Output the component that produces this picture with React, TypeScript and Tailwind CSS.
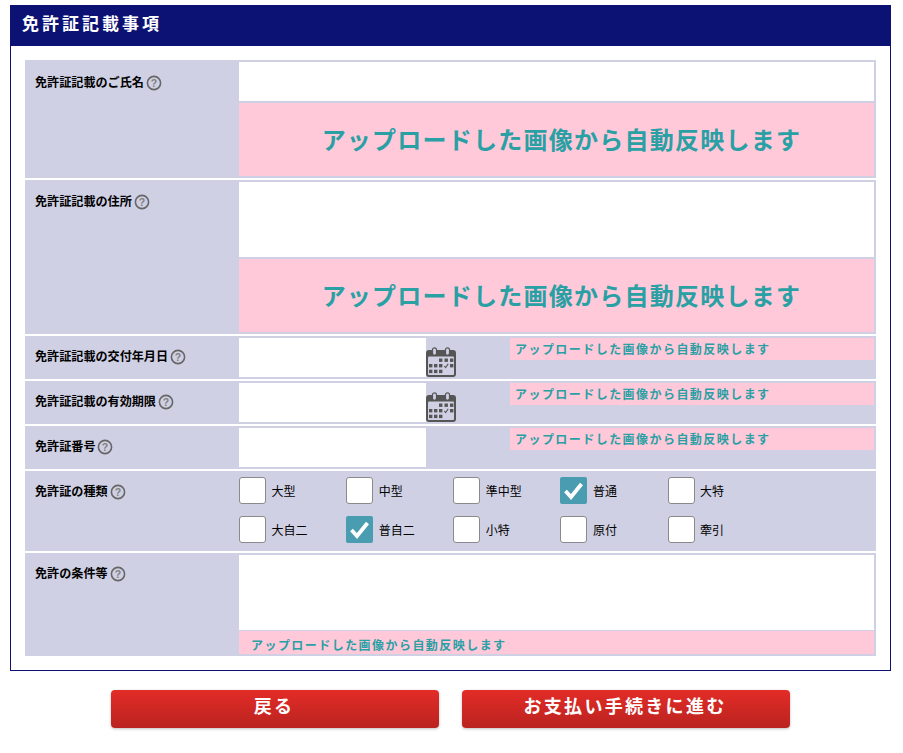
const msg = "アップロードした画像から自動反映します";

function Help() {
  return (
    <svg width="16" height="16" viewBox="0 0 16 16" className="ml-[2px] mt-[0.5px] shrink-0">
      <circle cx="8" cy="8" r="6.6" fill="none" stroke="#666" strokeWidth="1.6" />
      <text x="8" y="11.7" textAnchor="middle" fontSize="10.5" fontWeight="700" fill="#808080" fontFamily="Liberation Sans, sans-serif">?</text>
    </svg>
  );
}

function Label({ text }: { text: string }) {
  return (
    <div className="w-[214px] shrink-0 pl-[10px] flex items-start text-[12.1px] font-bold text-black leading-[16px]">
      <span>{text}</span>
      <Help />
    </div>
  );
}

function Calendar() {
  const cells = [
    [13, 11.5], [18.5, 11.5], [24, 11.5],
    [3, 17], [8, 17], [13, 17], [24, 17],
    [3, 22.7], [8, 22.7], [13, 22.7],
  ];
  return (
    <svg width="30" height="30" viewBox="0 0 30 30" className="shrink-0 self-end">
      <path d="M3 3h24a3 3 0 0 1 3 3v21a3 3 0 0 1-3 3H3a3 3 0 0 1-3-3V6a3 3 0 0 1 3-3z" fill="#555" />
      <rect x="2" y="9.5" width="26" height="18.5" rx="1" fill="#d0d0e4" />
      <rect x="6.5" y="0.8" width="4" height="7.5" rx="2" fill="#d0d0e4" stroke="#555" strokeWidth="1.2" />
      <rect x="19.5" y="0.8" width="4" height="7.5" rx="2" fill="#d0d0e4" stroke="#555" strokeWidth="1.2" />
      {cells.map(([x, y], i) => (
        <rect key={i} x={x} y={y} width="3.4" height="3.4" fill="#555" />
      ))}
      <path d="M18.3 19l1.3 1.5 2.6-3.6" fill="none" stroke="#555" strokeWidth="1.1" />
    </svg>
  );
}

function Check({ label, checked }: { label: string; checked?: boolean }) {
  return (
    <div className="w-[107.15px] h-[27px] flex items-center">
      <div
        className={
          checked
            ? "w-[27px] h-[27px] rounded-[2px] bg-[#4a9cb0] flex items-center justify-center"
            : "w-[27px] h-[27px] rounded-[3px] bg-white border border-[#8a8a8a]"
        }
      >
        {checked && (
          <svg width="21" height="19" viewBox="0 0 21 19">
            <path d="M2.5 10l5.5 6L18.5 3" fill="none" stroke="#fff" strokeWidth="3.8" />
          </svg>
        )}
      </div>
      <span className="ml-[5.5px] text-[12px] text-black">{label}</span>
    </div>
  );
}

function BigPink({ h }: { h: string }) {
  return (
    <div className={`${h} bg-[#ffc9da] flex items-center justify-center pl-[10px] pb-[2px] text-[24px] font-bold text-[#29a0a4] tracking-[1.25px]`}>
      {msg}
    </div>
  );
}

function SmallPink() {
  return (
    <div className="ml-auto w-[364px] h-[22px] bg-[#ffc9da] pl-[5px] flex items-center text-[12px] font-bold text-[#29a0a4] tracking-[1.45px]">
      {msg}
    </div>
  );
}

function DateRow({ text, calendar, top }: { text: string; calendar?: boolean; top: string }) {
  return (
    <div className="h-[43px] bg-[#d0d0e4] flex">
      <div className={top}>
        <Label text={text} />
      </div>
      <div className="flex-1 flex py-[2px] pr-[2px]">
        <div className="w-[187px] bg-white" />
        {calendar && <Calendar />}
        <SmallPink />
      </div>
    </div>
  );
}

function Btn({ text }: { text: string }) {
  return (
    <button className="w-[328px] h-[38px] pb-[8px] pr-[2px] rounded-[4px] bg-gradient-to-b from-[#e32c27] to-[#ba2320] text-white text-[18px] leading-[26px] font-bold tracking-[2.3px] shadow-[0_1px_3px_rgba(0,0,0,0.25)]">
      {text}
    </button>
  );
}

export default function App() {
  return (
    <div className="w-[903px] h-[753px] bg-white pt-[5px] pl-[10px] font-['Noto_Sans_CJK_JP',sans-serif]">
      <div className="w-[881px] h-[666px] border border-[#0c1273]">
        <div className="h-[41px] -mt-px -mx-px bg-[#0c1273] pl-[12px] pb-[5px] flex items-center text-white text-[17px] font-bold tracking-[3px]">
          免許証記載事項
        </div>
        <div className="mt-[14px] mx-[14px] flex flex-col gap-[2px]">
          <div className="h-[118px] bg-[#d0d0e4] flex">
            <div className="pt-[14px]"><Label text="免許証記載のご氏名" /></div>
            <div className="flex-1 flex flex-col gap-[2px] py-[2px] pr-[2px]">
              <div className="h-[39px] bg-white" />
              <BigPink h="flex-1" />
            </div>
          </div>
          <div className="h-[154px] bg-[#d0d0e4] flex">
            <div className="pt-[13px]"><Label text="免許証記載の住所" /></div>
            <div className="flex-1 flex flex-col gap-[2px] py-[2px] pr-[2px]">
              <div className="h-[75px] bg-white" />
              <BigPink h="flex-1" />
            </div>
          </div>
          <DateRow text="免許証記載の交付年月日" calendar top="pt-[12px]" />
          <DateRow text="免許証記載の有効期限" calendar top="pt-[12px]" />
          <DateRow text="免許証番号" top="pt-[12px]" />
          <div className="h-[80px] bg-[#d0d0e4] flex">
            <div className="pt-[12px]"><Label text="免許証の種類" /></div>
            <div className="flex-1 pt-[6px] flex flex-col gap-[12px]">
              <div className="flex">
                <Check label="大型" />
                <Check label="中型" />
                <Check label="準中型" />
                <Check label="普通" checked />
                <Check label="大特" />
              </div>
              <div className="flex">
                <Check label="大自二" />
                <Check label="普自二" checked />
                <Check label="小特" />
                <Check label="原付" />
                <Check label="牽引" />
              </div>
            </div>
          </div>
          <div className="h-[103px] bg-[#d0d0e4] flex">
            <div className="pt-[12px]"><Label text="免許の条件等" /></div>
            <div className="flex-1 flex flex-col gap-[1px] py-[2px] pr-[2px]">
              <div className="h-[75px] bg-white" />
              <div className="flex-1 bg-[#ffc9da] pl-[12px] pt-[4px] flex items-center text-[12px] font-bold text-[#29a0a4] tracking-[1.45px]">
                {msg}
              </div>
            </div>
          </div>
        </div>
      </div>
      <div className="mt-[19px] ml-[101px] flex gap-[23px]">
        <Btn text="戻る" />
        <Btn text="お支払い手続きに進む" />
      </div>
    </div>
  );
}
